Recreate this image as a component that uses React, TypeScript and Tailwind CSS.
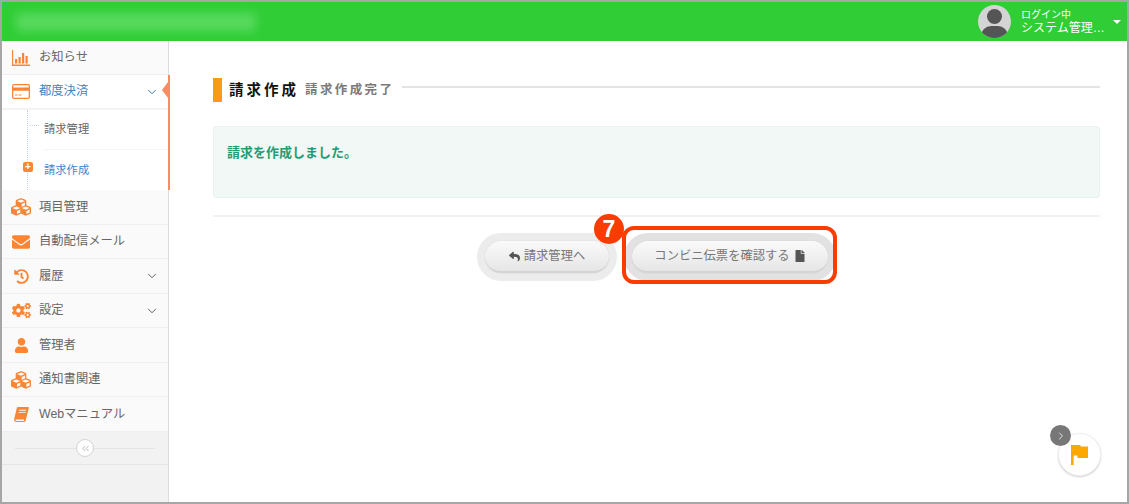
import { ChevronDown, ChevronRight, ChevronsLeft } from "lucide-react";
import { FaCubes, FaEnvelope, FaFile, FaHistory, FaCogs, FaReply, FaUser } from "react-icons/fa";
import type { ComponentType } from "react";

const FONT = { fontFamily: '"Liberation Sans", "Noto Sans CJK JP", sans-serif' };

type IconProps = { className?: string };

function ChartIcon({ className }: IconProps) {
  return (
    <svg viewBox="0 0 18 16" className={className} fill="currentColor">
      <path d="M0 0h1.2v14.6H18V16H0z" />
      <path d="M3 9h2.2v4.4H3zM6.5 7H8.700v6.400H6.500zM10 3h2.200v10.400H10zM13.500 6h2.200v7.400h-2.200z" />
    </svg>
  );
}

function CardIcon({ className }: IconProps) {
  return (
    <svg viewBox="0 0 18 15" className={className} fill="currentColor">
      <path
        fillRule="evenodd"
        d="M2 0h14a2 2 0 0 1 2 2v11a2 2 0 0 1-2 2H2a2 2 0 0 1-2-2V2a2 2 0 0 1 2-2zM1.300 3.400h15.400V2a.7.7 0 0 0-.7-.7H2a.7.7 0 0 0-.7.7zM1.300 6.800V13a.7.7 0 0 0 .7.7h14a.7.7 0 0 0 .7-.7V6.800z"
      />
      <path d="M3 10.500h2.500v1H3zM6.500 10.500h3v1h-3z" />
    </svg>
  );
}

function TiltedBook({ className }: IconProps) {
  return (
    <svg viewBox="0 0 16 16" className={className} fill="currentColor">
      <path d="M4.200 0H15c.6 0 1 .5.800 1.100L12.700 13.500c-.3 1.300-1.200 2.500-2.700 2.500H2.300C.9 16-.2 14.700.1 13.200L3 1c.2-.6.600-1 1.200-1z" />
      <path fill="#fafafa" d="M5.600 3h7.400l-.25 1H5.350zM5 5.200h7.400l-.25 1H4.750zM1.700 13.300h9.300c-.2.700-.3 1.100-.7 1.500H2.300c-.5 0-.8-.7-.6-1.500z" />
    </svg>
  );
}

function FlagIcon({ className }: IconProps) {
  return (
    <svg viewBox="0 0 17 20" className={className} fill="currentColor">
      <path d="M0 0h9.500v1.600H17v11.400H6.500v-2.400H2.600V20H0z" />
    </svg>
  );
}

const MENU_BOTTOM: { label: string; Icon: ComponentType<IconProps>; size: string; chevron?: boolean; h: string }[] = [
  { label: "項目管理", Icon: FaCubes, size: "text-[20px]", h: "h-[35px]" },
  { label: "自動配信メール", Icon: FaEnvelope, size: "text-[18px]", h: "h-[34px]" },
  { label: "履歴", Icon: FaHistory, size: "text-[15px]", chevron: true, h: "h-[35px]" },
  { label: "設定", Icon: FaCogs, size: "text-[19px]", chevron: true, h: "h-[34px]" },
  { label: "管理者", Icon: FaUser, size: "text-[15px]", h: "h-[35px]" },
  { label: "通知書関連", Icon: FaCubes, size: "text-[20px]", h: "h-[34px]" },
  { label: "Webマニュアル", Icon: TiltedBook, size: "h-[15px] w-[15px]", h: "h-[35px]" },
];

function MenuRow({ label, Icon, size, chevron, h }: (typeof MENU_BOTTOM)[number]) {
  return (
    <div className={`flex ${h} items-center border-b border-[#efefef] bg-[#fafafa] pl-[5px] pr-[9px]`}>
      <span className="flex w-[28px] justify-center text-[#fb8533]">
        <Icon className={size} />
      </span>
      <span className="ml-[4px] text-[12.300px] text-[#666]">{label}</span>
      {chevron && <ChevronDown className="ml-auto h-[14px] w-[14px] text-[#555]" strokeWidth={1.6} />}
    </div>
  );
}

export default function App() {
  return (
    <div style={FONT} className="flex h-[504px] w-[1129px] flex-col overflow-hidden border-2 border-[#a6a6a6] bg-white">
      {/* header */}
      <header className="flex h-[39px] shrink-0 items-center overflow-hidden bg-[#30cd36]">
        <div className="ml-[14px] h-[18px] w-[240px] rounded-sm bg-[#62dc68] opacity-80 blur-[5px]" />
        <div className="ml-auto flex items-center">
          <div className="relative h-[33px] w-[33px] overflow-hidden rounded-full bg-[#d4d4d4]">
            <span className="absolute left-[9px] top-[4px] h-[15px] w-[15px] rounded-full bg-[#555]" />
            <span className="absolute left-[3px] top-[21px] h-[20px] w-[27px] rounded-full bg-[#555]" />
          </div>
          <div className="ml-[10px] w-[84px] whitespace-nowrap text-white">
            <p className="text-[10px] leading-[12px]">ログイン中</p>
            <p className="text-[12px] leading-[14px]">システム管理…</p>
          </div>
          <span className="ml-[8px] mr-[6px] h-0 w-0 border-x-[4px] border-t-[4px] border-x-transparent border-t-white" />
        </div>
      </header>

      <div className="flex min-h-0 flex-1">
        {/* sidebar */}
        <aside className="flex w-[167px] shrink-0 flex-col border-r border-[#dcdcdc] bg-[#f2f2f2]">
          <div className="flex h-[34px] items-center border-b border-[#efefef] bg-[#fafafa] pl-[5px] pr-[9px]">
            <span className="flex w-[28px] justify-center text-[#fb8533]">
              <ChartIcon className="h-[16px] w-[18px]" />
            </span>
            <span className="ml-[4px] text-[12.300px] text-[#666]">お知らせ</span>
          </div>

          <div className="relative z-10 -mr-[2px] border-r-2 border-[#fb8c5f] bg-white">
            <div className="flex h-[35px] items-center border-b-2 border-[#f3f3f3] pl-[5px] pr-[9px]">
              <span className="flex w-[28px] justify-center text-[#fb8533]">
                <CardIcon className="h-[15px] w-[18px]" />
              </span>
              <span className="ml-[4px] text-[12.300px] text-[#3d85c6]">都度決済</span>
              <ChevronDown className="ml-auto h-[14px] w-[14px] text-[#2f6fa8]" strokeWidth={1.6} />
            </div>
            <span className="absolute right-0 top-[7px] h-0 w-0 border-y-[8px] border-r-[6px] border-y-transparent border-r-[#fb8c5f]" />

            <div className="relative pl-[42px]">
              <span className="absolute bottom-0 left-[25px] top-0 border-l border-dotted border-[#c4d4e6]" />
              <div className="flex h-[40px] items-center border-b border-[#f5f5f5] text-[11.300px] text-[#666]">
                <span className="absolute left-[28px] top-[15px] w-[9px] border-t border-dotted border-[#c4d4e6]" />
                請求管理
              </div>
              <div className="flex h-[40px] items-center text-[11.300px] text-[#3d85c6]">
                <span className="absolute left-[21px] top-[52px] flex h-[10px] w-[10px] items-center justify-center rounded-[2px] bg-[#fb8533] text-[10px] font-bold leading-none text-white">
                  +
                </span>
                請求作成
              </div>
            </div>
          </div>

          {MENU_BOTTOM.map((m) => (
            <MenuRow key={m.label} {...m} />
          ))}

          <div className="flex h-[33px] items-center border-b border-[#e6e6e6] px-[13px]">
            <span className="h-px flex-1 bg-[#e4e4e4]" />
            <span className="flex h-[18px] w-[18px] items-center justify-center rounded-full border border-[#d2d2d2] bg-white">
              <ChevronsLeft className="h-[11px] w-[11px] text-[#999]" strokeWidth={1.5} />
            </span>
            <span className="h-px flex-1 bg-[#e4e4e4]" />
          </div>
        </aside>

        {/* main */}
        <main className="relative min-w-0 flex-1 pl-[44px] pr-[27px] pt-[37px]">
          <div className="flex h-[24px] items-center">
            <span className="h-[24px] w-[9px] bg-[#fb9a14]" />
            <h1 className="ml-[7px] pt-[1px] text-[14.500px] font-bold tracking-[3px] text-[#111]">請求作成</h1>
            <span className="ml-[6px] pt-[1px] text-[12.500px] font-bold tracking-[2.400px] text-[#7a7a7a]">請求作成完了</span>
            <span className="mb-[7px] ml-[8px] h-[2px] flex-1 bg-[#e4e4e4]" />
          </div>

          <div className="mt-[24px] h-[72px] rounded-[3px] border border-[#e8f3ef] bg-[#f1f8f6] px-[13px] pt-[17px] text-[13px] font-bold leading-[18px] text-[#1f9d74]">
            請求を作成しました。
          </div>

          <div className="mt-[17px] h-[2px] bg-[#f2f2f2]" />

          <div className="mt-[16px] flex justify-center">
            <div className="rounded-full bg-[#ececec] p-[8px]">
              <button className="flex h-[32px] w-[124px] items-center justify-center gap-[4px] rounded-full border-b-2 border-[#d4d4d4] bg-gradient-to-b from-[#fafafa] to-[#e6e6e6] text-[12.300px] text-[#777] shadow-[0_0_1px_#bbb]">
                <FaReply className="text-[11px] text-[#555]" />
                請求管理へ
              </button>
            </div>
            <div className="ml-[7px] rounded-full bg-[#e2e2e2] p-[8px]">
              <button className="flex h-[32px] w-[196px] items-center justify-center gap-[4px] rounded-full border-b-2 border-[#d4d4d4] bg-gradient-to-b from-[#fafafa] to-[#e6e6e6] text-[12.300px] text-[#777] shadow-[0_0_1px_#bbb]">
                コンビニ伝票を確認する
                <FaFile className="text-[12px] text-[#555]" />
              </button>
            </div>
          </div>

          {/* callout over the button */}
          <div className="absolute left-[453px] top-[185px] h-[58px] w-[215px] rounded-[12px] border-[4px] border-[#fb3c00]" />
          <span className="absolute left-[425px] top-[173px] flex h-[30px] w-[30px] items-center justify-center rounded-full bg-[#fb3c00] text-[23px] font-bold leading-none text-white">
            7
          </span>

          {/* floating flag */}
          <div className="absolute bottom-[26px] right-[26px] flex h-[43px] w-[43px] items-center justify-center rounded-full border border-[#f0f0f0] bg-white shadow-[0_1px_2px_#ccc]">
            <FlagIcon className="h-[20px] w-[17px] text-[#fca800]" />
          </div>
          <span className="absolute bottom-[56px] right-[56px] flex h-[21px] w-[21px] items-center justify-center rounded-full bg-[#777]">
            <ChevronRight className="h-[12px] w-[12px] text-white" strokeWidth={1.6} />
          </span>
        </main>
      </div>
    </div>
  );
}
